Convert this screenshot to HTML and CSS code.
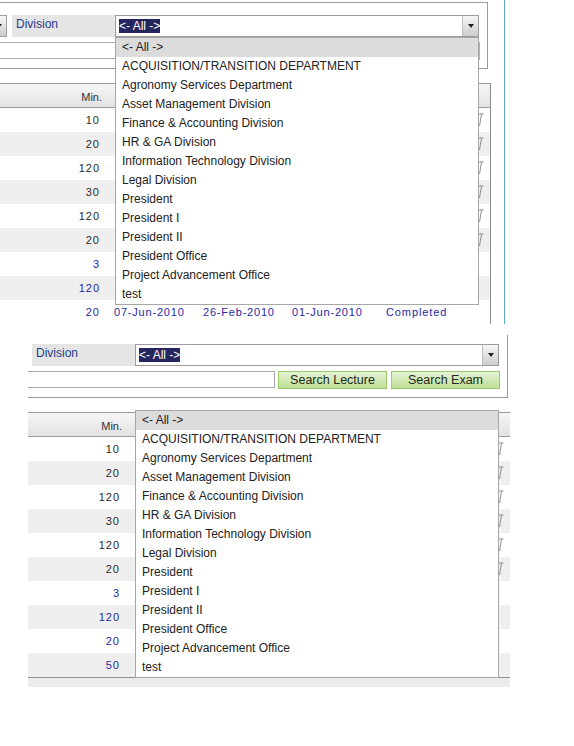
FILE: index.html
```html
<!DOCTYPE html>
<html>
<head>
<meta charset="utf-8">
<meta name="viewport" content="width=device-width, initial-scale=1">
<link rel="stylesheet" href="styles.css">
</head>
<body>

<!-- ************************ list opened under the combo ******************************** -->
<div class="shot shot-top">
  <div class="app">
    <div class="filter">
      <div class="filter-row">
        <div class="mini-select"><span class="combo-btn"></span></div>
        <label class="filter-label">Division</label>
        <div class="combo"><span class="combo-value">&lt;- All -&gt;</span><span class="combo-btn"></span></div>
      </div>
      <div class="search-row">
        <input type="text" class="search-box">
        <button class="btn-green">Search Lecture</button>
        <button class="btn-green btn-exam">Search Exam</button>
      </div>
    </div>

    <table class="grid">
      <colgroup><col class="c-min"><col class="c-date"><col class="c-date"><col class="c-date3"><col class="c-status"><col class="c-icon"></colgroup>
      <tr class="head"><th class="min-head">Min.</th><th></th><th></th><th></th><th></th><th></th></tr>
      <tr><td class="num">10</td><td></td><td></td><td></td><td></td><td class="icon"><svg width="10" height="18" viewBox="0 0 10 18"><path d="M3.5 3h5M6.5 3l-2 12" stroke="#8e8e8e" fill="none"/></svg></td></tr>
      <tr class="alt"><td class="num">20</td><td></td><td></td><td></td><td></td><td class="icon"><svg width="10" height="18" viewBox="0 0 10 18"><path d="M3.5 3h5M6.5 3l-2 12" stroke="#8e8e8e" fill="none"/></svg></td></tr>
      <tr><td class="num">120</td><td></td><td></td><td></td><td></td><td class="icon"><svg width="10" height="18" viewBox="0 0 10 18"><path d="M3.5 3h5M6.5 3l-2 12" stroke="#8e8e8e" fill="none"/></svg></td></tr>
      <tr class="alt"><td class="num">30</td><td></td><td></td><td></td><td></td><td class="icon"><svg width="10" height="18" viewBox="0 0 10 18"><path d="M3.5 3h5M6.5 3l-2 12" stroke="#8e8e8e" fill="none"/></svg></td></tr>
      <tr><td class="num">120</td><td></td><td></td><td></td><td></td><td class="icon"><svg width="10" height="18" viewBox="0 0 10 18"><path d="M3.5 3h5M6.5 3l-2 12" stroke="#8e8e8e" fill="none"/></svg></td></tr>
      <tr class="alt"><td class="num">20</td><td></td><td></td><td></td><td></td><td class="icon"><svg width="10" height="18" viewBox="0 0 10 18"><path d="M3.5 3h5M6.5 3l-2 12" stroke="#8e8e8e" fill="none"/></svg></td></tr>
      <tr class="blue"><td class="num">3</td><td></td><td></td><td></td><td></td><td></td></tr>
      <tr class="blue alt"><td class="num">120</td><td></td><td></td><td></td><td></td><td></td></tr>
      <tr class="blue"><td class="num">20</td><td>07-Jun-2010</td><td>26-Feb-2010</td><td>01-Jun-2010</td><td class="status">Completed</td><td></td></tr>
    </table>

    <ul class="droplist droplist-open">
      <li class="hover">&lt;- All -&gt;</li>
      <li>ACQUISITION/TRANSITION DEPARTMENT</li>
      <li>Agronomy Services Department</li>
      <li>Asset Management Division</li>
      <li>Finance &amp; Accounting Division</li>
      <li>HR &amp; GA Division</li>
      <li>Information Technology Division</li>
      <li>Legal Division</li>
      <li>President</li>
      <li>President I</li>
      <li>President II</li>
      <li>President Office</li>
      <li>Project Advancement Office</li>
      <li>test</li>
    </ul>
  </div>
</div>

<!-- ************************ list dropped over the grid ******************************** -->
<div class="shot shot-bottom">
  <div class="app">
    <div class="filter">
      <div class="filter-row">
        <div class="mini-select"><span class="combo-btn"></span></div>
        <label class="filter-label">Division</label>
        <div class="combo"><span class="combo-value">&lt;- All -&gt;</span><span class="combo-btn"></span></div>
      </div>
      <div class="search-row">
        <input type="text" class="search-box">
        <button class="btn-green">Search Lecture</button>
        <button class="btn-green btn-exam">Search Exam</button>
      </div>
    </div>

    <table class="grid">
      <colgroup><col class="c-min"><col class="c-date"><col class="c-date"><col class="c-date3"><col class="c-status"><col class="c-icon"></colgroup>
      <tr class="head"><th class="min-head">Min.</th><th></th><th></th><th></th><th></th><th></th></tr>
      <tr><td class="num">10</td><td></td><td></td><td></td><td></td><td class="icon"><svg width="10" height="18" viewBox="0 0 10 18"><path d="M3.5 3h5M6.5 3l-2 12" stroke="#8e8e8e" fill="none"/></svg></td></tr>
      <tr class="alt"><td class="num">20</td><td></td><td></td><td></td><td></td><td class="icon"><svg width="10" height="18" viewBox="0 0 10 18"><path d="M3.5 3h5M6.5 3l-2 12" stroke="#8e8e8e" fill="none"/></svg></td></tr>
      <tr><td class="num">120</td><td></td><td></td><td></td><td></td><td class="icon"><svg width="10" height="18" viewBox="0 0 10 18"><path d="M3.5 3h5M6.5 3l-2 12" stroke="#8e8e8e" fill="none"/></svg></td></tr>
      <tr class="alt"><td class="num">30</td><td></td><td></td><td></td><td></td><td class="icon"><svg width="10" height="18" viewBox="0 0 10 18"><path d="M3.5 3h5M6.5 3l-2 12" stroke="#8e8e8e" fill="none"/></svg></td></tr>
      <tr><td class="num">120</td><td></td><td></td><td></td><td></td><td class="icon"><svg width="10" height="18" viewBox="0 0 10 18"><path d="M3.5 3h5M6.5 3l-2 12" stroke="#8e8e8e" fill="none"/></svg></td></tr>
      <tr class="alt"><td class="num">20</td><td></td><td></td><td></td><td></td><td class="icon"><svg width="10" height="18" viewBox="0 0 10 18"><path d="M3.5 3h5M6.5 3l-2 12" stroke="#8e8e8e" fill="none"/></svg></td></tr>
      <tr class="blue"><td class="num">3</td><td></td><td></td><td></td><td></td><td></td></tr>
      <tr class="blue alt"><td class="num">120</td><td></td><td></td><td></td><td></td><td></td></tr>
      <tr class="blue"><td class="num">20</td><td></td><td></td><td></td><td></td><td></td></tr>
      <tr class="blue alt"><td class="num">50</td><td></td><td></td><td></td><td></td><td></td></tr>
    </table>
    <div class="grid-foot"></div>

    <ul class="droplist droplist-detached">
      <li class="hover">&lt;- All -&gt;</li>
      <li>ACQUISITION/TRANSITION DEPARTMENT</li>
      <li>Agronomy Services Department</li>
      <li>Asset Management Division</li>
      <li>Finance &amp; Accounting Division</li>
      <li>HR &amp; GA Division</li>
      <li>Information Technology Division</li>
      <li>Legal Division</li>
      <li>President</li>
      <li>President I</li>
      <li>President II</li>
      <li>President Office</li>
      <li>Project Advancement Office</li>
      <li>test</li>
    </ul>
  </div>
</div>

</body>
</html>
```

FILE: styles.css
```css
* {box-sizing: border-box}
body {
  margin: 0;
  font-family: "Liberation Sans", Arial, sans-serif;
  font-size: 12px;
  color: #222;
  background: #fff;
}

/* the two captures of the same search form */
.shot {
  overflow: hidden;
  position: relative;
}
.shot-top {
  width: 505px;
  height: 324px;
  padding-top: 2px;
  border-right: 1px solid #5fa8c0;
}
.shot-top .app {
  margin-left: -20px;
}
.shot-bottom {
  margin: 11px 0 0 28px;
  width: 482px;
  height: 355px;
}
.shot-bottom .app {
  margin: -4px 0 0 -28px;
}

.app {
  position: relative;
  width: 525px;
}

/* filter panel */
.filter {
  width: 508px;
  height: 67px;
  border: 1px solid #9a9a9a;
  border-left: none;
  padding: 12px 0 0 4px;
}
.filter-row {
  display: flex;
  height: 22px;
}
.mini-select {
  display: flex;
  width: 23px;
  height: 22px;
  margin-right: 5px;
  border: 1px solid #a0a0a0;
  background: #fff;
}
.filter-label {
  width: 103px;
  height: 22px;
  padding: 2px 0 0 4px;
  line-height: 14px;
  background: #e5e5e5;
  color: #25398f;
}
.combo {
  display: flex;
  align-items: center;
  width: 364px;
  height: 22px;
  padding-left: 3px;
  border: 1px solid #9c9c9c;
  background: #fff;
}
.combo-value {
  line-height: 14px;
  background: #26265e;
  color: #fff;
}
.combo-btn {
  display: flex;
  align-items: center;
  justify-content: center;
  margin-left: auto;
  width: 16px;
  height: 20px;
  border-left: 1px solid #bdbdbd;
  background: linear-gradient(#f6f6f6, #cdcdcd);
}
.combo-btn::after {
  content: "";
  border-left: 3.5px solid transparent;
  border-right: 3.5px solid transparent;
  border-top: 4px solid #222;
}

.search-row {
  display: flex;
  margin-top: 5px;
}
.search-box {
  width: 271px;
  height: 17px;
  margin: 0;
  padding: 0;
  border: 1px solid #a8a8a8;
  background: #fff;
}
.btn-green {
  width: 109px;
  height: 18px;
  margin: 0 0 0 3px;
  padding: 0;
  border: 1px solid #9ccb6b;
  background: linear-gradient(#e6f3d6, #bddf94);
  font-family: "Liberation Sans", Arial, sans-serif;
  font-size: 12.5px;
  line-height: 16px;
  color: #1d2b1d;
}
.btn-exam {
  margin-left: 4px;
}

/* result grid */
.grid {
  margin: 14px 0 0 4px;
  width: 507px;
  table-layout: fixed;
  border-collapse: separate;
  border-spacing: 0;
  border-top: 1px solid #9a9a9a;
  border-right: 1px solid #8a8a8a;
  border-bottom: 1px solid #8f8f8f;
  font-size: 11px;
  color: #2b2b2b;
}
.c-min {width: 122px}
.c-date {width: 89px}
.c-date3 {width: 94px}
.c-status {width: 92px}
.c-icon {width: 20px}

.grid tr {
  height: 24px;
}
.grid th {
  padding: 0 4px;
  border-bottom: 1px solid #9a9a9a;
  background: linear-gradient(#f6f6f6, #e2e2e2);
  font-weight: normal;
  text-align: left;
  color: #333;
}
.grid th.min-head {
  text-align: right;
  padding-right: 4px;
  padding-top: 3px;
}
.grid td {
  padding: 0 8px;
  white-space: nowrap;
  overflow: hidden;
  letter-spacing: 0.8px;
}
.grid tr.alt td {
  background: #efefef;
}
.grid tr.blue td {
  color: #1f28a6;
}
.grid td.num {
  text-align: right;
  padding-right: 6px;
  letter-spacing: 1px;
}
.grid td.status {
  letter-spacing: 0.9px;
}
.grid td.icon {
  padding: 0 0 0 5px;
  line-height: 0;
}
.grid-foot {
  margin-left: 4px;
  width: 506px;
  height: 9px;
  background: #ececec;
}

/* open division list */
.droplist {
  position: absolute;
  left: 135px;
  width: 364px;
  margin: 0;
  padding: 0;
  list-style: none;
  border: 1px solid #a6a6a6;
  background: #fff;
  font-size: 12px;
  color: #222;
}
.droplist li {
  height: 19px;
  line-height: 19px;
  padding-left: 6px;
  white-space: nowrap;
}
.droplist li.hover {
  background: #dcdcdc;
}
.droplist-open {
  top: 35px;
}
.droplist-detached {
  top: 79px;
}
```
